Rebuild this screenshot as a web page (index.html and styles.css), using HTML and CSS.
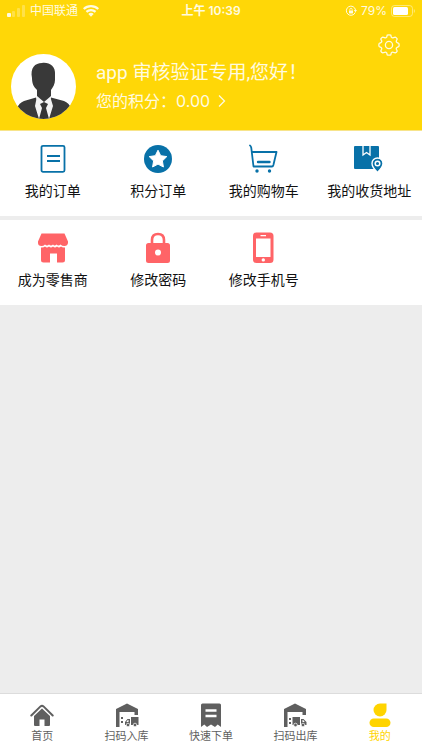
FILE: index.html
```
<!DOCTYPE html>
<html lang="zh-CN">
<head>
<meta charset="utf-8">
<meta name="viewport" content="width=device-width, initial-scale=1">
<title>我的</title>
<link rel="stylesheet" href="styles.css">
</head>
<body>
<header class="hero">
  <div class="status">
    <div class="status-side">
      <svg class="signal" viewBox="0 0 18 12" width="18" height="12"><rect x="0" y="8" width="4" height="4" rx="1"/><g opacity=".3"><rect x="5" y="6" width="3" height="6" rx="1"/><rect x="10" y="3" width="3" height="9" rx="1"/><rect x="15" y="0" width="3" height="12" rx="1"/></g></svg>
      <span>中国联通</span>
      <svg viewBox="0 0 16 12" width="16" height="12"><path d="M8 0C4.900 0 2 1.200 0 3.200L1.500 4.800A9.300 9.300 0 0 1 14.500 4.800L16 3.200C14 1.200 11.100 0 8 0ZM8 4C6 4 4.100 4.800 2.700 6.100L4.200 7.700A5.500 5.500 0 0 1 11.800 7.700L13.300 6.100C11.900 4.800 10 4 8 4ZM8 7.800C7 7.800 6 8.200 5.300 8.900L8 11.700L10.700 8.900C10 8.200 9 7.800 8 7.800Z"/></svg>
    </div>
    <span class="time">上午 10:39</span>
    <div class="status-side status-end">
      <svg class="lock" viewBox="0 0 12 12" width="12" height="12"><path d="M10.200 7.500A4.600 4.600 0 1 1 10.500 5" fill="none" stroke="currentColor"/><path d="M8.800 5H12L10.500 7.200Z"/><rect x="4" y="5.400" width="4" height="3" rx=".4"/><path d="M4.800 5.500V4.500a1.200 1.200 0 0 1 2.400 0V5.500" fill="none" stroke="currentColor" stroke-width=".8"/></svg>
      <span>79%</span>
      <svg viewBox="0 0 24 12" width="24" height="12"><rect x=".5" y=".5" width="21" height="11" rx="3" fill="none" stroke="currentColor" opacity=".5"/><rect x="2" y="2" width="15" height="8" rx="1.500" fill="#fff"/><path d="M22.800 4v4q1.200-.6 1.200-2t-1.200-2Z" opacity=".5"/></svg>
    </div>
  </div>
  <div class="tools">
    <button class="settings" aria-label="设置"><svg class="outline" viewBox="0 0 22 22" width="22" height="22"><path d="M9.200 1.200Q11 .4 12.800 1.200L13.300 3.200Q14.200 4.300 15.500 3.700L17.200 3.100Q18.700 3.600 19.200 5L18.400 6.700Q17.900 8 19.200 8.700L20.800 9.400Q21.500 11 20.800 12.600L19.200 13.300Q17.900 14 18.400 15.300L19.200 17Q18.700 18.400 17.200 18.900L15.500 18.300Q14.200 17.700 13.300 18.800L12.800 20.800Q11 21.600 9.200 20.800L8.700 18.800Q7.800 17.700 6.500 18.300L4.800 18.900Q3.300 18.400 2.800 17L3.600 15.300Q4.100 14 2.800 13.300L1.200 12.600Q.5 11 1.200 9.400L2.800 8.700Q4.100 8 3.600 6.700L2.800 5Q3.300 3.600 4.800 3.100L6.500 3.700Q7.800 4.300 8.700 3.200Z"/><circle cx="11" cy="11" r="3.600"/></svg></button>
  </div>
  <div class="profile">
    <svg class="avatar" viewBox="0 0 65 65" width="65" height="65"><defs><clipPath id="round"><circle cx="32.500" cy="32.500" r="32.500"/></clipPath></defs><circle cx="32.500" cy="32.500" r="32.500" fill="#fff"/><g clip-path="url(#round)"><path d="M6 65V54Q8 49 13 47L25 43.500L33 65L40 43.500L53 47Q58 49 60 54V65Z" fill="#3a3a3a"/><path d="M26 42L33 47L39 42L42 52L38 65H28L24 52Z" fill="#f4f4f4"/><path d="M29 50L33 48L37 50L35 54L38 65H28L31 54Z" fill="#353535"/><path d="M21 24C19 14 24 9 31 9C38 8 45 12 44 21L44 26C44 30 42 33 40 36V42L33 48L26 42V36C23 33 21 30 21 24Z" fill="#393939"/></g></svg>
    <div class="who">
      <h1>app 审核验证专用,您好！</h1>
      <a class="points" href="#points"><span>您的积分：0.00</span><svg class="outline" viewBox="0 0 8 12" width="8" height="12"><path d="M1 .5L6.500 6L1 11.500"/></svg></a>
    </div>
  </div>
</header>
<main>
  <nav class="grid blue" aria-label="订单">
    <a href="#orders"><svg viewBox="0 0 32 32" width="32" height="32"><rect x="4.500" y="2.800" width="23" height="26" rx="1.500" fill="none" stroke="currentColor" stroke-width="1.800"/><path d="M10 13H23M10 18H23" stroke="currentColor" stroke-width="2"/></svg><span>我的订单</span></a>
    <a href="#point-orders"><svg viewBox="0 0 32 32" width="32" height="32"><circle cx="16" cy="16" r="14"/><path d="M16 7.200L18.700 12.700L24.800 13.600L20.400 17.900L21.400 24L16 21.100L10.600 24L11.600 17.900L7.200 13.600L13.300 12.700Z" fill="#fff" stroke="#fff" stroke-linejoin="round"/></svg><span>积分订单</span></a>
    <a href="#cart"><svg viewBox="0 0 32 32" width="32" height="32"><path d="M2 2.500Q3 3 3.300 5L5.500 23.500H24Q25 23.500 25.400 22L28.500 9H4" fill="none" stroke="currentColor" stroke-width="1.800" stroke-linejoin="round" stroke-linecap="round"/><path d="M10 19H21.500" stroke="currentColor" stroke-width="2.400" stroke-linecap="round"/><circle cx="9" cy="28" r="1.700"/><circle cx="21.500" cy="28" r="1.700"/></svg><span>我的购物车</span></a>
    <a href="#address"><svg viewBox="0 0 32 32" width="32" height="32"><rect x="1" y="3" width="25" height="23" rx="1"/><path d="M10 3V12L13.500 9.500L17 12V3" fill="none" stroke="#fff" stroke-width="1.300"/><path d="M24.500 15A5.500 5.500 0 0 0 19 20.500C19 24 24.500 29.500 24.500 29.500S30 24 30 20.500A5.500 5.500 0 0 0 24.500 15Z" stroke="#fff" stroke-width="1.400"/><circle cx="24.500" cy="20.500" r="2.300" fill="none" stroke="#fff" stroke-width="1.500"/></svg><span>我的收货地址</span></a>
  </nav>
  <nav class="grid coral" aria-label="账户">
    <a href="#retailer"><svg viewBox="0 0 32 32" width="32" height="32"><path d="M4.500 1.500H27.500L31 9.500V11Q30.500 14 27.500 14Q25 14 23.500 12.500Q21.500 14.500 19.500 12.500Q17.500 14.500 16 12.500Q14 14.500 12 12.500Q10 14.500 8 12.500Q6.500 14 4.500 14Q1 14 1 11V9.500Z"/><path d="M4 15.500H5Q7 15.500 8 14.500Q10 16.500 12 14.500Q14 16.500 16 14.500Q18 16.500 20 14.500Q22 16.500 24 14.500Q25 15.500 27 15.500H28V28Q28 30.500 25.500 30.500H20V21.500H13V30.500H6.500Q4 30.500 4 28Z"/></svg><span>成为零售商</span></a>
    <a href="#password"><svg viewBox="0 0 32 32" width="32" height="32"><path d="M10 12V8Q10 2 16 2T22 8V12" fill="none" stroke="currentColor" stroke-width="2.600"/><path fill-rule="evenodd" d="M6.500 11H25.500Q28 11 28 13.500V28.500Q28 31 25.500 31H6.500Q4 31 4 28.500V13.500Q4 11 6.500 11ZM16 17.500a3 3 0 1 0 0 6a3 3 0 1 0 0-6Z"/></svg><span>修改密码</span></a>
    <a href="#phone"><svg viewBox="0 0 32 32" width="32" height="32"><path fill-rule="evenodd" d="M8.500 .5H22Q25.500 .5 25.500 4V27.500Q25.500 31 22 31H8.500Q5 31 5 27.500V4Q5 .5 8.500 .5ZM8 6.500V25H22.500V6.500ZM12.500 3V4.200H18V3ZM15.300 26.200a1.700 1.700 0 1 0 0 3.400a1.700 1.700 0 1 0 0-3.400Z"/></svg><span>修改手机号</span></a>
  </nav>
</main>
<nav class="tabs" aria-label="主导航">
  <a href="#home"><svg viewBox="0 0 24 24" width="24" height="24"><path d="M1.300 12.500L10.500 3.400Q12 2 13.500 3.400L22.700 12.500" fill="none" stroke="currentColor" stroke-width="2" stroke-linecap="round"/><path d="M4 13L12 5.500L20 13V22Q20 23 19 23H14.500V16.500H9.500V23H5Q4 23 4 22Z"/></svg><span>首页</span></a>
  <a href="#in"><svg viewBox="0 0 24 24" width="24" height="24"><path d="M1 6L12 .5L23 6V12H19.500V9H4.500V24H1Z"/><path d="M6 14h2v2H6zM6 18h2v2H6zM16 14H23.500V22H16ZM15 16H12.500L10 19V22H15Z"/><path d="M12.800 17L11.300 19H13.500V17Z" fill="#fff"/><circle cx="13" cy="22" r="1.800" stroke="#fff" stroke-width=".7"/><circle cx="20" cy="22" r="1.800" stroke="#fff" stroke-width=".7"/></svg><span>扫码入库</span></a>
  <a href="#quick"><svg viewBox="0 0 24 24" width="24" height="24"><path d="M3.500 .5H20.500Q22 .5 22 2V24L18.700 21.500L16 24L12 21.500L8 24L5.300 21.500L2 24V2Q2 .5 3.500 .5Z"/><path d="M6.500 7.500H17.500M6.500 13H17.500" stroke="#fff" stroke-width="2.400"/></svg><span>快速下单</span></a>
  <a href="#out"><svg viewBox="0 0 24 24" width="24" height="24"><path d="M1 6L12 .5L23 6V12H19.500V9H4.500V24H1Z"/><path d="M6 15h2v2H6zM6 19h2v2H6zM9.500 14H17V22H9.500ZM18 16H20.500L23.500 19V22H18Z"/><path d="M20.200 17L21.700 19H19.500V17Z" fill="#fff"/><circle cx="12.500" cy="22" r="1.800" stroke="#fff" stroke-width=".7"/><circle cx="20" cy="22" r="1.800" stroke="#fff" stroke-width=".7"/></svg><span>扫码出库</span></a>
  <a class="active" href="#me" aria-current="page"><svg viewBox="0 0 24 24" width="24" height="24"><path d="M18.500 .5V7A6.500 6.500 0 1 1 12 .5Z"/><rect x="1.500" y="15.500" width="21" height="8.500" rx="4.250"/></svg><span>我的</span></a>
</nav>
</body>
</html>
```
FILE: styles.css
```
* { box-sizing: border-box; }
body {
  margin: 0;
  min-height: 100vh;
  display: flex;
  flex-direction: column;
  background: #ededed;
  color: #111;
  font-family: Inter, "Noto Sans CJK SC", sans-serif;
}
svg { display: block; flex: none; fill: currentColor; }
.outline { fill: none; stroke: currentColor; stroke-width: 1.3; }
a { color: inherit; text-decoration: none; }
.hero {
  background: #ffd707;
  color: #fffbe0;
  padding-bottom: 11px;
  border-bottom: 1px solid #f7e48b;
}
.status {
  display: grid;
  grid-template-columns: 1fr auto 1fr;
  align-items: center;
  height: 22px;
  padding: 0 7px;
  font-size: 12px;
  line-height: 16px;
}
.status-side { display: flex; align-items: center; gap: 5px; }
.status-end { justify-content: flex-end; gap: 4px; }
.time { font-weight: 600; }
.tools { display: flex; justify-content: flex-end; padding: 12px 22px 0; }
.settings {
  border: 0;
  padding: 0;
  background: none;
  color: inherit;
}
.profile {
  display: flex;
  align-items: center;
  gap: 20px;
  padding: 0 11px;
  margin-top: -2px;
}
h1 {
  margin: 0;
  font-family: Roboto, "Noto Sans CJK SC", sans-serif;
  font-size: 19px;
  line-height: 28px;
  font-weight: 400;
}
.points {
  display: flex;
  align-items: center;
  gap: 8px;
  font-size: 16px;
  line-height: 28px;
}
main { flex: 1; }
.grid {
  display: grid;
  grid-template-columns: repeat(4, 1fr);
  background: #fff;
  margin-bottom: 4px;
  padding: 12px 0 15px;
}
.grid a {
  display: flex;
  flex-direction: column;
  align-items: center;
  gap: 6px;
  font-size: 14px;
  line-height: 20px;
  white-space: nowrap;
}
.blue svg { color: #0871a8; }
.coral svg { color: #ff6467; }
.tabs {
  display: grid;
  grid-template-columns: repeat(5, 1fr);
  background: #fff;
  border-top: 1px solid #dcdcdc;
  padding: 9px 0 6px;
}
.tabs a {
  display: flex;
  flex-direction: column;
  align-items: center;
  gap: 1px;
  color: #5f5f5f;
  font-size: 11px;
  line-height: 16px;
}
.tabs .active { color: #ffd400; }
```
